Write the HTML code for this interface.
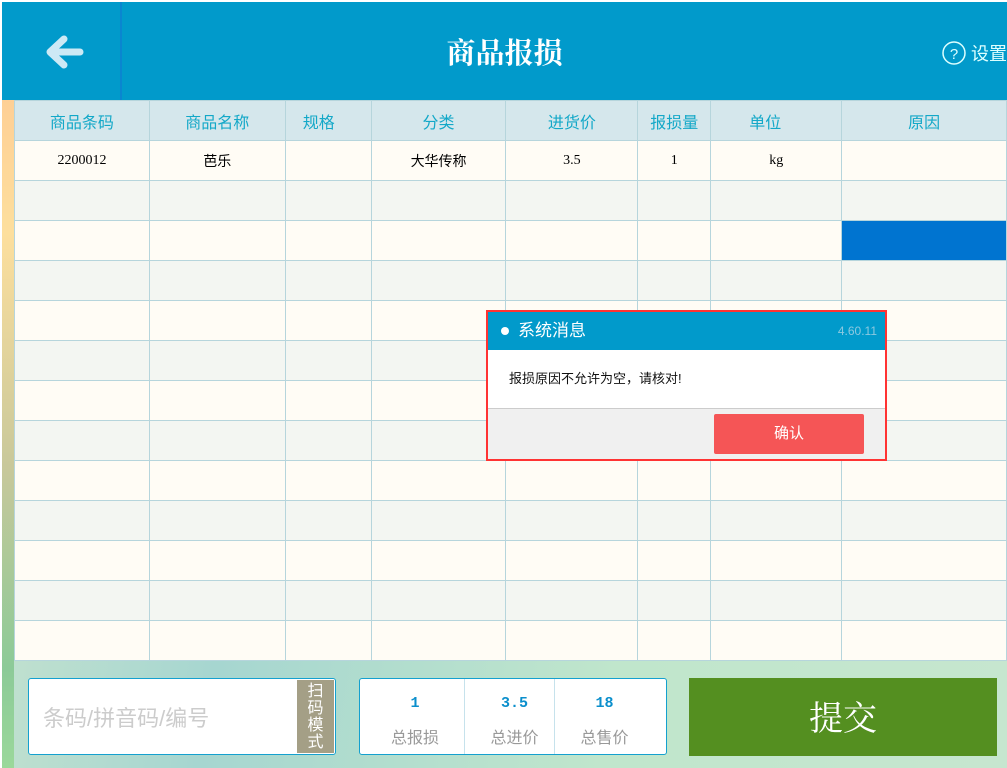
<!DOCTYPE html>
<html><head><meta charset="utf-8"><style>
*{margin:0;padding:0;box-sizing:border-box}
body{width:1007px;height:768px;overflow:hidden;background:#fff;font-family:"Liberation Sans","Noto Sans CJK SC",sans-serif;position:relative}
.hdr{position:absolute;left:2px;top:2px;width:1005px;height:98px;background:#019acb}
.back{position:absolute;left:0;top:0;width:120px;height:98px;border-right:2px solid #0a86d0}
.title{position:absolute;left:0;width:1005px;top:29px;text-align:center;color:#fff;font-size:29px;font-weight:bold;font-family:"Noto Serif CJK SC","Noto Sans CJK SC",serif}
.set{position:absolute;left:940px;top:38px;color:#dff;font-size:18px}
.strip{position:absolute;left:2px;top:100px;width:12px;height:668px;background:linear-gradient(#fecf95,#fddf9d 20%,#c8c89a 55%,#8cca98 85%,#9ad89a)}
table{position:absolute;left:14px;top:100px;border-collapse:collapse;table-layout:fixed}
td,th{border:1px solid #b6d5dc;height:40px;font-weight:normal;font-size:15px;text-align:center}
th{background:#d5e7ec;color:#13a8c8;font-size:16px}
tr:nth-child(odd) td{background:#f3f6f2}
tr:nth-child(even) td{background:#fffcf5}
td{font-family:"Liberation Serif","Noto Sans CJK SC",serif;font-size:14px}
.bot{position:absolute;left:14px;top:661px;width:993px;height:107px;background:linear-gradient(100deg,#bfe0cf,#a6d6d0 20%,#c0e6cc 60%,#c6e6cf)}
.inp{position:absolute;left:28px;top:678px;width:308px;height:77px;background:#fff;border:1px solid #14a0cf;border-radius:3px}
.scan{position:absolute;right:1px;top:1px;width:37px;height:73px;background:#a49f86;color:#fff;font-size:16px;line-height:17px;text-align:center;padding-top:3px}
.stat{position:absolute;left:359px;top:678px;width:308px;height:77px;background:#fff;border:1px solid #14a0cf;border-radius:3px}
.s{position:absolute;top:0;width:100px;height:75px;text-align:center}
.s b{display:block;margin-top:16px;color:#0b8fcc;font-size:15px;font-family:"Liberation Mono",monospace}
.s i{display:block;font-style:normal;color:#999;font-size:16px;margin-top:12px}
.btn{position:absolute;left:689px;top:678px;width:308px;height:78px;background:#548f20;color:#fff;font-size:34px;text-align:center;line-height:76px;font-family:"Noto Serif CJK SC",serif}
.dlg{position:absolute;left:486px;top:310px;width:401px;height:151px;border:2px solid #f33;background:#f0f0f0}
.dt{height:38px;background:#019acb;color:#fff;font-size:17px;line-height:38px;padding-left:30px;position:relative}
.dt:before{content:"";position:absolute;left:13px;top:15px;width:8px;height:8px;border-radius:50%;background:#fff}
.dt span{position:absolute;right:8px;top:0;font-size:12px;color:#8cc9e0}
.db{height:59px;background:#fff;border-bottom:1px solid #ccc;font-size:13px;padding:18px 0 0 21px;color:#111}
.ok{position:absolute;left:226px;top:102px;width:150px;height:40px;background:#f55556;border-radius:2px;color:#fff;text-align:center;line-height:40px;font-size:15px}
</style></head><body>
<div class="hdr">
<div class="back"><svg width="120" height="98"><path d="M78 50H52M62 37L48 50L62 63" stroke="#cde9f5" stroke-width="7" stroke-linecap="round" stroke-linejoin="round" fill="none"/></svg></div>
<div class="title">商品报损</div>
<div class="set"><svg width="24" height="24" style="vertical-align:-5px"><circle cx="12" cy="12" r="11" stroke="#dff" stroke-width="1.5" fill="none"/><text x="12" y="18" text-anchor="middle" fill="#dff" font-size="15" font-family="Liberation Sans">?</text></svg> 设置</div>
</div>
<div class="strip"></div>
<table>
<colgroup><col width="135"><col width="136"><col width="86"><col width="135"><col width="132"><col width="73"><col width="131"><col width="165"></colgroup>
<tr><th>商品条码</th><th>商品名称</th><th style="text-align:left;padding-left:17px">规格</th><th>分类</th><th>进货价</th><th>报损量</th><th style="text-align:left;padding-left:38px">单位</th><th>原因</th></tr>
<tr><td>2200012</td><td style="font-family:'Noto Sans CJK SC'">芭乐</td><td></td><td style="font-family:'Noto Sans CJK SC'">大华传称</td><td>3.5</td><td>1</td><td>kg</td><td></td></tr>
<tr><td></td><td></td><td></td><td></td><td></td><td></td><td></td><td></td></tr>
<tr><td></td><td></td><td></td><td></td><td></td><td></td><td></td><td style="background:#0074d0"></td></tr>
<tr><td></td><td></td><td></td><td></td><td></td><td></td><td></td><td></td></tr>
<tr><td></td><td></td><td></td><td></td><td></td><td></td><td></td><td></td></tr>
<tr><td></td><td></td><td></td><td></td><td></td><td></td><td></td><td></td></tr>
<tr><td></td><td></td><td></td><td></td><td></td><td></td><td></td><td></td></tr>
<tr><td></td><td></td><td></td><td></td><td></td><td></td><td></td><td></td></tr>
<tr><td></td><td></td><td></td><td></td><td></td><td></td><td></td><td></td></tr>
<tr><td></td><td></td><td></td><td></td><td></td><td></td><td></td><td></td></tr>
<tr><td></td><td></td><td></td><td></td><td></td><td></td><td></td><td></td></tr>
<tr><td></td><td></td><td></td><td></td><td></td><td></td><td></td><td></td></tr>
<tr><td></td><td></td><td></td><td></td><td></td><td></td><td></td><td></td></tr>
</table>
<div class="bot"></div>
<div class="inp"><div style="position:absolute;left:14px;top:22px;color:#ccc;font-size:22px">条码/拼音码/编号</div><div class="scan">扫<br>码<br>模<br>式</div></div>
<div class="stat">
<div class="s" style="left:5px"><b>1</b><i>总报损</i></div>
<div class="s" style="left:104px;border-left:1px solid #c6e2ec"><b>3.5</b><i>总进价</i></div>
<div class="s" style="left:194px;border-left:1px solid #c6e2ec"><b>18</b><i>总售价</i></div>
</div>
<div class="btn">提交</div>
<div class="dlg">
<div class="dt">系统消息<span>4.60.11</span></div>
<div class="db">报损原因不允许为空，请核对!</div>
<div class="ok">确认</div>
</div>
</body></html>
